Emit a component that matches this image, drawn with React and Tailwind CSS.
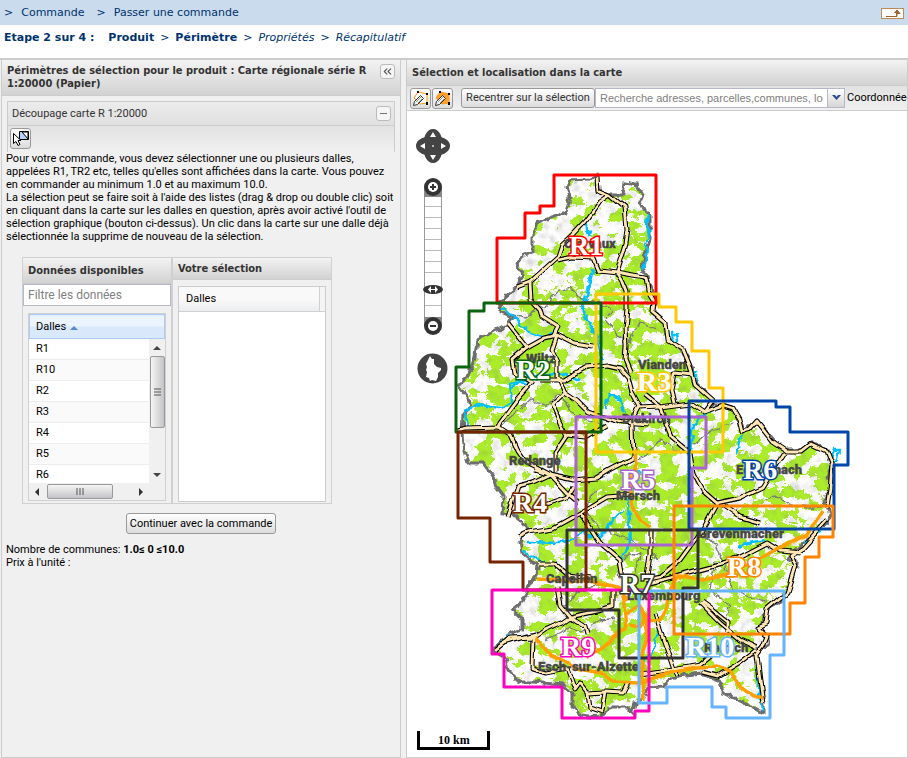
import { ChevronsLeft, Minus } from 'lucide-react'

const OUTLINE =
  'M597 175L590 180L570 181L567 188L570 197L566 213L553 217L537 223L533 235L533 252L522 257L517 263L523 275L517 288L505 298L499 303L501 312L513 317L507 325L492 333L477 339L475 357L472 365L470 373L458 385L468 398L470 407L463 415L462 432L463 447L468 463L483 463L492 475L497 487L503 495L502 513L517 515L522 523L528 530L520 543L522 553L533 562L538 565L537 575L530 582L526 590L528 595L520 603L512 610L522 618L522 630L508 635L493 648L497 653L505 658L508 670L520 682L533 682L563 685L572 693L572 707L580 715L600 717L610 707L627 707L633 713L635 703L642 698L648 688L663 687L673 677L700 673L720 682L723 692L745 703L763 712L763 693L757 660L756 650L768 645L768 638L758 630L763 623L765 610L777 603L787 593L793 575L797 563L788 558L800 547L817 530L832 517L825 500L833 483L827 477L832 463L827 450L812 443L803 450L783 450L768 433L757 422L743 432L737 413L723 405L712 405L710 397L697 385L693 372L683 350L665 333L665 322L652 310L657 303L648 277L642 270L643 260L650 240L650 215L643 208L640 202L643 195L637 185L625 183L623 195L608 195L598 190Z'

const ROADS = [
  '597,177 598,190 610,195 625,208 627,230 625,243 616,272 623,283 627,293 627,310 625,327 626,347 625,360 630,372',
  '610,195 600,202 587,220 573,235 562,245 558,257 530,282 531,300 540,310 542,317 558,327 553,337',
  '558,260 573,257 593,258 598,270 616,272 633,275 645,277 647,290 653,300 652,312 665,323 667,340 683,350',
  '517,287 530,282',
  '507,323 527,348 545,338 557,335 575,344 593,347',
  '527,348 513,360 515,373 532,383',
  '557,335 552,350 558,362 558,377 565,392 552,405 560,423 567,435 555,453 555,473',
  '540,380 565,380 587,367 607,365 620,368 628,377 632,392 640,407 632,422 633,457',
  '565,392 577,400 590,413 596,415 623,422 650,424',
  '533,382 517,400 500,423 498,428 467,429 457,431',
  '498,428 512,437 518,450 527,463 550,475 573,480 597,478 610,470 633,458',
  '567,435 585,437 605,425',
  '683,350 690,367 695,385 712,400 703,412',
  '640,408 660,407 690,403 703,412 723,405 733,408 740,420 743,432 749,430 757,421 772,440 787,450 803,450 812,443 827,450 832,463 830,490 827,507',
  '693,375 675,373 672,390 675,403',
  '644,394 660,407 667,425 672,438 690,453 693,473 702,490 717,503',
  '785,452 763,487 740,498 717,503 702,530 680,560 660,577 645,580',
  '723,505 740,517 760,523',
  '535,470 550,475 567,493 578,502',
  '507,517 517,487 533,483 550,475',
  '520,537 530,532 553,528 580,513 607,497 632,495',
  '580,513 590,527 600,543 620,560 623,577',
  '538,563 553,563 567,575 590,578',
  '557,587 560,605 570,617 585,627 587,635',
  '650,530 650,553 647,577',
  '543,505 567,497 573,487',
  '495,650 510,638 535,637 545,630 563,622 570,617 603,610 613,607 613,590',
  '500,644 535,634 533,638 532,668 545,672 567,668',
  '567,668 575,690 580,683 588,693 590,707 602,711 605,692 588,693',
  '605,692 622,693 627,683',
  '655,613 660,630 673,667 678,677',
  '700,603 720,623 740,640 757,648',
  '702,602 713,610 728,622 728,633',
  '757,650 740,663 717,677 702,673',
  '640,675 673,670 700,665 712,655',
  '827,520 803,547 790,555 795,567 787,593 767,610 765,623 757,627 767,637 763,647 757,655 760,680 763,703',
  '650,583 693,572 727,563 767,542 780,550 800,552',
]

const MOTORWAYS = [
  '633,450 636,463 632,480 632,503 640,520 650,528',
  '537,579 560,580 600,583 620,588 628,600',
  '535,637 550,655 567,662 578,668 600,673 612,682 640,683 647,680 670,673 697,668 717,667 730,673 743,690 753,697 763,697',
  '587,660 613,638 627,630 625,603 622,592',
  '627,613 640,607 645,618 640,626 630,624',
  '642,612 645,623 648,637 642,652 642,683 643,700',
  '647,622 660,620 667,607 668,595 677,577 703,580 727,575 760,558 780,547 807,535 823,510',
]

const RIVERS = [
  '649,215 647,225 650,233 645,242 648,252 642,270',
  '593,270 587,293 582,310 597,337 602,360',
  '502,307 517,320 530,333 543,337 557,333',
  '467,430 465,410 480,405 500,408 512,403 510,383 533,378 560,373 580,380',
  '510,390 518,380 526,385 534,376 528,374 522,379',
  '585,222 590,237',
  '674,342 672,334 677,333 678,341',
  '695,370 695,385',
  '831,458 834,450 840,450 838,459 833,462',
  '690,453 693,423 712,410',
  '742,435 737,455',
  '605,410 608,395 620,398 624,412',
  '523,550 530,555 545,562',
  '527,542 560,543 583,533 600,537 613,520 623,510',
  '640,470 638,480 628,500 630,545 620,560',
  '495,648 510,635',
  '660,630 655,640 650,657 640,660',
  '757,660 758,680 762,710',
  '756,676 760,690',
  '805,543 822,530',
  '737,547 752,542 765,540',
]

const DISTRICTS = [
  '501,312 525,318 535,310 550,305 552,295 570,287 582,300 600,303 612,310 605,320 627,345 640,322 655,330',
  '460,432 500,426 530,400 545,405 560,395 575,415 600,425',
  '640,460 660,440 680,452 700,440 712,430 735,423',
  '620,580 618,565 630,553 640,555 634,575',
  '702,530 715,545 722,560 735,590 760,600 768,602',
  '715,560 710,590 730,605 725,620',
  '595,490 585,510 600,530 630,540 660,560',
  '765,500 775,495 790,505 822,508',
  '560,607 572,600 580,590 600,585',
  '545,640 570,628 580,632 600,620 615,618',
]

// density of the woods: cx, cy, rx, ry, opacity
const WOODS = [
  [640, 250, 22, 70, 0.6],
  [570, 300, 60, 20, 0.4],
  [560, 370, 100, 60, 0.5],
  [630, 340, 40, 50, 0.5],
  [500, 400, 40, 50, 0.4],
  [660, 400, 50, 40, 0.45],
  [540, 480, 70, 50, 0.2],
  [630, 490, 55, 60, 0.65],
  [670, 540, 50, 50, 0.95],
  [740, 470, 90, 50, 0.4],
  [760, 540, 60, 40, 0.35],
  [735, 600, 50, 50, 0.45],
  [560, 570, 60, 50, 0.45],
  [630, 640, 40, 50, 0.6],
  [560, 650, 50, 30, 0.3],
  [590, 700, 40, 20, 0.6],
  [700, 650, 50, 40, 0.35],
]

const TOWNS = [
  ['Clervaux', 564, 248],
  ['Wiltz', 526, 363],
  ['Vianden', 638, 369],
  ['Diekirch', 622, 423],
  ['Redange', 509, 465],
  ['Echternach', 736, 474],
  ['Mersch', 616, 500],
  ['Grevenmacher', 698, 538],
  ['Capellen', 546, 583],
  ['Luxembourg', 627, 600],
  ['Remich', 704, 652],
  ['Esch-sur-Alzette', 538, 671],
]

const SHEETS = [
  { id: 'R1', color: '#ff0000', x: 569, y: 255, d: 'M497 303V238H525V213H540V206H554V175H656V303Z' },
  { id: 'R3', color: '#ffc800', x: 637, y: 391, d: 'M596 294H659V307H676V322H692V351H709V388H723V452H596Z' },
  { id: 'R2', color: '#0a640f', x: 516, y: 379, d: 'M456 432V367H469V311H484V303H601V432Z' },
  { id: 'R4', color: '#782300', x: 513, y: 512, d: 'M458 432H586V590H523V562H490V518H458Z' },
  { id: 'R5', color: '#aa64d2', x: 621, y: 489, d: 'M576 417H706V468H692V545H576Z' },
  { id: 'R6', color: '#0046aa', x: 743, y: 479, d: 'M689 401H776V407H790V432H848V465H834V529H689Z' },
  { id: 'R7', color: '#323232', x: 620, y: 593, d: 'M567 530H698V588H683V658H619V610H567Z' },
  { id: 'R8', color: '#ff8200', x: 727, y: 576, d: 'M674 506H833V537H819V557H805V603H790V634H674Z' },
  { id: 'R9', color: '#ff00be', x: 561, y: 656, d: 'M492 590H649V711H635V718H562V687H504V654H492Z' },
  { id: 'R10', color: '#64b4ff', x: 686, y: 656, d: 'M639 591H784V655H770V718H726V707H712V687H667V703H639Z' },
]

const ROWS = ['R1', 'R10', 'R2', 'R3', 'R4', 'R5', 'R6']

function Lines({ list, ...props }) {
  return (
    <g fill="none" strokeLinejoin="round" {...props}>
      {list.map(points => <polyline key={points} points={points} />)}
    </g>
  )
}

function RegionMap() {
  return (
    <svg
      viewBox="407 111 501 645"
      className="block w-[501px] h-[645px] shrink-0"
      role="img"
      aria-label="Carte du Luxembourg"
    >
      <defs>
        <clipPath id="country"><path d={OUTLINE} /></clipPath>
        <filter id="woods" filterUnits="userSpaceOnUse" x="450" y="170" width="400" height="555" colorInterpolationFilters="sRGB">
          <feGaussianBlur in="SourceGraphic" stdDeviation="12" result="density" />
          <feTurbulence type="fractalNoise" baseFrequency="0.065 0.09" numOctaves="5" seed="7" result="noise" />
          <feComposite in="noise" in2="density" operator="arithmetic" k2="1" k3="0.17" result="mix" />
          <feColorMatrix in="mix" values="0 0 0 0 0.67  0 0 0 0 0.93  0 0 0 0 0.17  0 0 0 60 -33.6" />
        </filter>
        <filter id="relief" filterUnits="userSpaceOnUse" x="450" y="170" width="400" height="555" colorInterpolationFilters="sRGB">
          <feTurbulence type="fractalNoise" baseFrequency="0.12" numOctaves="3" seed="3" />
          <feColorMatrix values="0 0 0 0 0.4  0 0 0 0 0.4  0 0 0 0 0.4  0.5 0 0 0 -0.22" />
        </filter>
        <filter id="jag" filterUnits="userSpaceOnUse" x="440" y="160" width="420" height="570">
          <feTurbulence type="fractalNoise" baseFrequency="0.14" numOctaves="2" seed="5" />
          <feDisplacementMap in="SourceGraphic" scale="7" xChannelSelector="R" yChannelSelector="G" />
        </filter>
        <filter id="bend" filterUnits="userSpaceOnUse" x="440" y="160" width="420" height="570">
          <feTurbulence type="fractalNoise" baseFrequency="0.05" numOctaves="1" seed="9" />
          <feDisplacementMap in="SourceGraphic" scale="8" xChannelSelector="R" yChannelSelector="G" />
        </filter>
      </defs>

      <g filter="url(#jag)">
        <path d={OUTLINE} fill="#fdfdfd" />
        <g clipPath="url(#country)">
          <g filter="url(#woods)">
            {WOODS.map(([cx, cy, rx, ry, o]) => (
              <ellipse key={`${cx}-${cy}`} cx={cx} cy={cy} rx={rx} ry={ry} fill="#000" fillOpacity={o} />
            ))}
          </g>
          <rect x="450" y="170" width="400" height="555" filter="url(#relief)" />
        </g>
        <Lines list={DISTRICTS} stroke="#787878" strokeWidth="1.3" />
        <path d={OUTLINE} fill="none" stroke="#6e6e6e" strokeWidth="3" />
        <Lines list={RIVERS} stroke="#00bfff" strokeWidth="2.4" />
      </g>
      <g filter="url(#bend)">
        <Lines list={ROADS} stroke="#000" strokeWidth="5" />
        <Lines list={ROADS} stroke="#ffe6b4" strokeWidth="2.8" />
        <Lines list={MOTORWAYS} stroke="#ffa000" strokeWidth="3.4" />
      </g>

      <g
        className="font-['Roboto','Liberation_Sans',sans-serif] text-[13px] font-black"
        fill="#464646"
        stroke="#464646"
        strokeWidth="0.3"
      >
        {TOWNS.map(([name, x, y]) => <text key={name} x={x} y={y}>{name}</text>)}
      </g>

      <g fill="none" strokeWidth="3" strokeLinejoin="round">
        {SHEETS.map(s => <path key={s.id} d={s.d} stroke={s.color} />)}
      </g>
      <g className="font-['Liberation_Serif',serif] text-[28px] font-bold" fill="#fff" strokeWidth="3" paintOrder="stroke">
        {SHEETS.map(s => <text key={s.id} x={s.x} y={s.y} stroke={s.color}>{s.id}</text>)}
      </g>

      {/* pan control */}
      <g fill="none" stroke="#444" strokeWidth="6">
        <ellipse cx="433" cy="146" rx="7" ry="14" />
        <ellipse cx="433" cy="146" rx="14" ry="7" />
      </g>
      <rect x="427" y="140" width="12" height="12" fill="#444" />
      <path d="M433 132l3 5h-6zM433 160l3-5h-6zM420 146l5-3v6zM446 146l-5-3v6z" fill="#fff" />
      <circle cx="433" cy="146" r="1" fill="#ddd" />

      {/* zoom slider */}
      <rect x="424.5" y="190" width="17" height="134" fill="#fff" stroke="#999" />
      <path d="M425 206.500h16M425 217.500h16M425 228.500h16M425 239.500h16M425 250.500h16M425 261.500h16M425 272.500h16M425 305.500h16" stroke="#bbb" />
      <path d="M424 188h18v9h-18zM424 317h18v9h-18z" fill="#888" />
      <circle cx="433" cy="187" r="9" fill="#333" />
      <circle cx="433" cy="187" r="5" fill="#fff" />
      <path d="M430 187h6M433 184v6" stroke="#333" strokeWidth="2" />
      <circle cx="433" cy="326" r="9" fill="#333" />
      <circle cx="433" cy="326" r="5" fill="#fff" />
      <path d="M430 326h6" stroke="#333" strokeWidth="2" />
      <ellipse cx="433" cy="289.500" rx="10" ry="4.500" fill="#333" />
      <path d="M431 286l-3 3.500 3 3.500zM435 286l3 3.500-3 3.500z" fill="#fff" />
      <path d="M430 289.500h6" stroke="#fff" />

      {/* full extent */}
      <circle cx="432.500" cy="368.500" r="15" fill="#444" />
      <path d="M430 356l2 3 2 0 0 5 3 3 4 1 0 2-3 3 0 4-2 4-4-1-2 1-1-3-3-1 1-5-1-2 1-3-1-3 2-4z" fill="#fff" />

      {/* scale bar */}
      <path d="M418.500 731v17.500h70V731" fill="none" stroke="#000" strokeWidth="3" />
      <text x="438" y="744" className="font-['Liberation_Serif',serif] text-[12px] font-bold">10 km</text>
    </svg>
  )
}

function IconButton({ label, children }) {
  return (
    <button
      aria-label={label}
      className="w-[21px] h-[21px] flex items-center justify-center border border-[#999] rounded-[3px] bg-linear-to-b from-white to-[#dcdcdc]"
    >
      {children}
    </button>
  )
}

function PolygonIcon({ fill }) {
  return (
    <svg width="17" height="17" viewBox="0 0 17 17">
      <path d="M2 8L6 2L15 4L15 13L8 14Z" fill={fill} stroke="#ff9619" />
      <path d="M1.500 15.500L2.500 11.500L8.500 5.500L11.500 8.500L5.500 14.500Z" fill="#f0f0f0" stroke="#333" />
      <path d="M4 12L9 7M6 13L10 9" stroke="#999" />
      <path d="M5 1h2v2h-2zM14 3h2v2h-2zM14 12h2v3h-2z" fill="#000" />
    </svg>
  )
}

function PanelTitle({ children }) {
  return (
    <h2 className="px-[5px] font-['DejaVu_Sans_Condensed','DejaVu_Sans',sans-serif] font-bold text-[#333] border-b border-[#ccc] bg-linear-to-b from-[#f3f3f3] to-[#d2d2d2]">
      {children}
    </h2>
  )
}

function VerticalScrollbar() {
  return (
    <div className="w-[16px] shrink-0 flex flex-col items-center bg-[#f0f0f0]">
      <svg width="16" height="17"><path d="M4 11l4-4 4 4z" fill="#444" /></svg>
      <div className="w-[15px] h-[72px] flex items-center justify-center border border-[#999] rounded-[2px] bg-linear-to-r from-[#f5f5f5] to-[#c4c4c8]">
        <svg width="7" height="9"><path d="M0 1h7M0 4h7M0 7h7" stroke="#555" /></svg>
      </div>
      <svg width="16" height="17" className="mt-auto"><path d="M4 7l4 4 4-4z" fill="#444" /></svg>
    </div>
  )
}

function HorizontalScrollbar() {
  return (
    <div className="h-[17px] mr-[16px] flex items-center bg-[#f0f0f0]">
      <svg width="18" height="16"><path d="M10 4l-4 4 4 4z" fill="#333" /></svg>
      <div className="w-[66px] h-[15px] flex items-center justify-center border border-[#999] rounded-[2px] bg-linear-to-b from-[#f5f5f5] to-[#c4c4c8]">
        <svg width="9" height="7"><path d="M1 0v7M4 0v7M7 0v7" stroke="#555" /></svg>
      </div>
      <svg width="18" height="16" className="ml-auto"><path d="M8 4l4 4-4 4z" fill="#333" /></svg>
    </div>
  )
}

function AvailableList() {
  return (
    <div className="w-[150px] flex flex-col border border-[#d0d0d0]">
      <PanelTitle><span className="block py-[6px]">Données disponibles</span></PanelTitle>
      <input
        aria-label="Filtre les données"
        placeholder="Filtre les données"
        className="h-[22px] w-full px-1 text-[12px] bg-white border border-[#b5b8c8] placeholder:text-[#808080] outline-none"
      />
      <div className="mx-[5px] mt-[7px] border border-[#d0d0d0] bg-[#f0f0f0]">
        <table className="w-full border-collapse">
          <thead>
            <tr>
              <th className="h-[24px] pl-[6px] text-left font-normal border border-[#aaccf6] bg-linear-to-b from-[#ebf3fd] from-50% to-[#d9e8fb] to-50%">
                Dalles
                <svg width="8" height="5" className="inline ml-1"><path d="M0 5l4-4 4 4z" fill="#5a8ac8" /></svg>
              </th>
            </tr>
          </thead>
        </table>
        <div className="flex h-[144px] overflow-hidden">
          <table className="flex-1 self-start w-full border-collapse">
            <tbody className="block">
              {ROWS.map(row => (
                <tr key={row} className="block bg-white even:bg-[#fafafa] border-b border-[#ededed]">
                  <td className="block h-[20px] pl-[7px] leading-[20px]">{row}</td>
                </tr>
              ))}
            </tbody>
          </table>
          <VerticalScrollbar />
        </div>
        <HorizontalScrollbar />
      </div>
    </div>
  )
}

function SelectionList() {
  return (
    <div className="w-[160px] flex flex-col border border-[#d0d0d0]">
      <PanelTitle><span className="block py-1">Votre sélection</span></PanelTitle>
      <div className="mx-[5px] mt-[6px] mb-[1px] flex-1 border border-[#ccc] bg-white">
        <table className="w-full border-collapse">
          <thead>
            <tr>
              <th className="h-[24px] pl-[7px] text-left font-normal border-b border-[#d0d0d0] bg-linear-to-b from-[#f9f9f9] from-50% to-[#ebedef]">
                Dalles
              </th>
              <th className="w-[6px] border-l border-b border-[#d0d0d0] bg-[#f4f4f4]" aria-label="Poignée" />
            </tr>
          </thead>
        </table>
      </div>
    </div>
  )
}

function Perimeter() {
  return (
    <section className="w-[400px] shrink-0 border-x border-b border-[#ccc] bg-[#f0f0f0] leading-[13px]">
      <PanelTitle>
        <span className="flex items-start justify-between h-[35px] pt-1 gap-2">
          <span className="whitespace-nowrap">
            Périmètres de sélection pour le produit : Carte régionale série R<br />
            1:20000 (Papier)
          </span>
          <button
            aria-label="Réduire"
            className="w-[15px] h-[15px] shrink-0 flex items-center justify-center border border-[#bbb] rounded-[3px] bg-[#f5f5f5] text-[#555]"
          >
            <ChevronsLeft size={13} />
          </button>
        </span>
      </PanelTitle>

      <div className="mx-[5px] mt-[5px] border border-b-0 border-[#ccc]">
        <div className="h-[24px] pl-1 pr-[3px] flex items-center justify-between text-[#333] bg-linear-to-b from-[#ececec] to-[#e0e0e0] border-b border-[#ccc]">
          <h3>Découpage carte R 1:20000</h3>
          <button
            aria-label="Replier"
            className="w-[15px] h-[15px] flex items-center justify-center border border-[#bbb] rounded-[3px] bg-[#f5f5f5] text-[#666]"
          >
            <Minus size={11} />
          </button>
        </div>
        <div className="h-[26px] pl-[2px] pt-[2px] bg-linear-to-b from-[#e2e2e2] to-[#f0f0f0]">
          <IconButton label="Sélection graphique">
            <svg width="17" height="17" viewBox="0 0 17 17">
              <path d="M7.500 1.500h9v8h-9z" fill="#b4d2ff" stroke="#000" />
              <path d="M10 2h6v6M10 2l6 7" fill="#fff" stroke="#000" />
              <path d="M1.500 3.500v10l2.500-2 2 4 2-1-2-4h3z" fill="#fff" stroke="#000" />
            </svg>
          </IconButton>
        </div>
      </div>

      <p className="px-1 whitespace-nowrap">
        Pour votre commande, vous devez sélectionner une ou plusieurs dalles,<br />
        appelées R1, TR2 etc, telles qu'elles sont affichées dans la carte. Vous pouvez<br />
        en commander au minimum 1.0 et au maximum 10.0.<br />
        La sélection peut se faire soit à l'aide des listes (drag &amp; drop ou double clic) soit<br />
        en cliquant dans la carte sur les dalles en question, après avoir activé l'outil de<br />
        sélection graphique (bouton ci-dessus). Un clic dans la carte sur une dalle déjà<br />
        sélectionnée la supprime de nouveau de la sélection.
      </p>

      <div className="ml-5 mt-[14px] h-[247px] flex">
        <AvailableList />
        <SelectionList />
      </div>

      <button className="block ml-[124px] mt-[9px] h-[21px] w-[150px] whitespace-nowrap border border-[#999] rounded-[3px] bg-linear-to-b from-white to-[#dcdcdc]">
        Continuer avec la commande
      </button>

      <p className="px-1 mt-[9px]">
        Nombre de communes: <b>1.0≤ 0 ≤10.0</b><br />
        Prix à l'unité :
      </p>
    </section>
  )
}

function MapPanel() {
  return (
    <section className="flex-1 min-w-0 flex flex-col border-x border-b border-[#ccc] bg-white">
      <PanelTitle><span className="flex items-center h-[25px] pt-[2px]">Sélection et localisation dans la carte</span></PanelTitle>
      <div className="h-[25px] pl-[3px] flex items-center whitespace-nowrap overflow-hidden bg-linear-to-b from-[#e2e2e2] to-[#f0f0f0] border-b border-[#ccc]">
        <div className="flex gap-[1px] mr-2 shrink-0">
          <IconButton label="Dessiner une ligne"><PolygonIcon fill="#fff" /></IconButton>
          <IconButton label="Dessiner un polygone"><PolygonIcon fill="#ffa02d" /></IconButton>
        </div>
        <button className="w-[134px] h-[20px] shrink-0 text-[#333] border border-[#999] rounded-[3px] bg-linear-to-b from-white to-[#dcdcdc]">
          Recentrer sur la sélection
        </button>
        <input
          aria-label="Recherche"
          placeholder="Recherche adresses, parcelles,communes, localités"
          className="w-[232px] h-[20px] shrink-0 px-1 font-['Liberation_Sans',sans-serif] text-[11px] bg-white border border-r-0 border-[#b5b8c8] placeholder:text-[#808080] outline-none"
        />
        <button aria-label="Ouvrir la liste" className="w-[18px] h-[20px] mr-[2px] shrink-0 flex items-center justify-center border border-[#b5b8c8] bg-linear-to-b from-white to-[#d5d5d5]">
          <svg width="9" height="6"><path d="M0 0h3l1.500 2 1.500-2h3l-4.500 5z" fill="#274b8c" /></svg>
        </button>
        <span>Coordonnées</span>
      </div>
      <RegionMap />
    </section>
  )
}

function App() {
  return (
    <div className="min-h-screen flex flex-col overflow-hidden bg-white text-black text-[11px] font-['Roboto','Liberation_Sans',sans-serif]">
      <header className="h-[25px] pl-1 pr-1 pt-[2px] flex items-center justify-between bg-[#c9dbed] text-[#00326e] font-['DejaVu_Sans',sans-serif]">
        <nav className="flex gap-2">
          <span>&gt;</span>
          <a href="#commande" className="mr-1">Commande</a>
          <span>&gt;</span>
          <a href="#passer">Passer une commande</a>
        </nav>
        <button aria-label="Remonter" className="border border-[#be8c5a] bg-white">
          <svg width="21" height="9" className="block"><path d="M4 7.500h11V4M12 4.500h6L15 1z" fill="#a06428" stroke="#a06428" /><path d="M4 4h10v3H4z" fill="#fff" /></svg>
        </button>
      </header>

      <div className="h-[33px] pl-1 pb-[6px] flex items-center gap-[6px] text-[#00326e] font-['DejaVu_Sans',sans-serif]">
        <b className="mr-2">Etape 2 sur 4 :</b>
        <b>Produit</b>
        <span>&gt;</span>
        <b>Périmètre</b>
        <span>&gt;</span>
        <i>Propriétés</i>
        <i>&gt;</i>
        <i>Récapitulatif</i>
      </div>

      <main className="flex-1 flex gap-[5px] pl-px border-t-2 border-[#ccc] bg-[#f0f0f0]">
        <Perimeter />
        <MapPanel />
      </main>
    </div>
  )
}

export default App
